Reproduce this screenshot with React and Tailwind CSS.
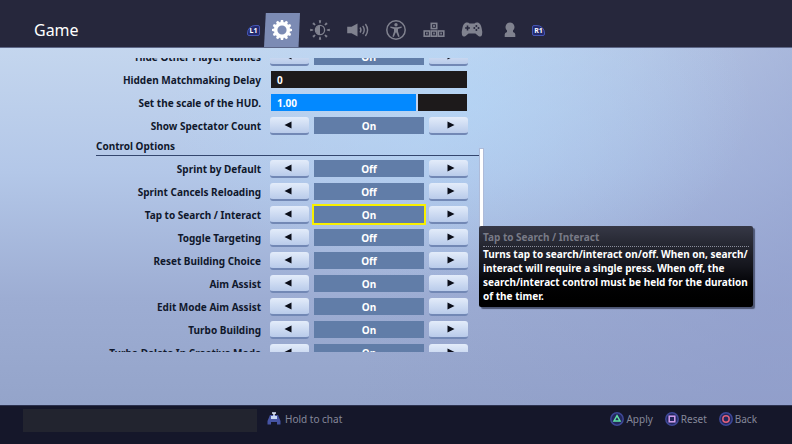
import { useState } from 'react';

const tabs = [
  { id: 'game', label: 'Game', Icon: GearIcon },
  { id: 'video', label: 'Brightness', Icon: SunIcon },
  { id: 'audio', label: 'Audio', Icon: SpeakerIcon },
  { id: 'accessibility', label: 'Accessibility', Icon: PersonIcon },
  { id: 'input', label: 'Input', Icon: KeysIcon },
  { id: 'controller', label: 'Controller', Icon: GamepadIcon },
  { id: 'account', label: 'Account', Icon: PawnIcon },
];

const controlOptions = [
  { name: 'Sprint by Default', value: false },
  { name: 'Sprint Cancels Reloading', value: false },
  { name: 'Tap to Search / Interact', value: true },
  { name: 'Toggle Targeting', value: false },
  { name: 'Reset Building Choice', value: false },
  { name: 'Aim Assist', value: true },
  { name: 'Edit Mode Aim Assist', value: true },
  { name: 'Turbo Building', value: true },
  { name: 'Turbo Delete In Creative Mode', value: true },
];

function GearIcon() {
  const teeth = [0, 30, 60, 90, 120, 150, 180, 210, 240, 270, 300, 330];
  return (
    <svg viewBox="0 0 24 24" className="size-6" fill="currentColor">
      {teeth.map((a) => (
        <path key={a} d="M10.3 5 L10.9 2 H13.1 L13.7 5 Z" transform={`rotate(${a} 12 12)`} />
      ))}
      <circle cx="12" cy="12" r="6.3" fill="none" stroke="currentColor" strokeWidth="3.4" />
    </svg>
  );
}

function SunIcon() {
  const rays = [0, 45, 90, 135, 180, 225, 270, 315];
  return (
    <svg viewBox="0 0 24 24" className="size-6" fill="currentColor">
      {rays.map((a) => (
        <path key={a} d="M10.8 2.2 H13.2 L12.6 5.2 H11.4 Z" transform={`rotate(${a} 12 12)`} />
      ))}
      <circle cx="12" cy="12" r="4.6" fill="none" stroke="currentColor" strokeWidth="1.3" />
      <path d="M12 7.5 a4.5 4.5 0 0 0 0 9 Z" />
    </svg>
  );
}

function SpeakerIcon() {
  return (
    <svg viewBox="0 0 24 24" className="size-6" fill="none" stroke="currentColor" strokeWidth="1.4">
      <path d="M1.2 8.8 H5.5 L11.5 5.5 V18.5 L5.5 15.2 H1.2 Z" fill="currentColor" stroke="none" />
      <path d="M14 9.5 Q16 12 14 14.5" />
      <path d="M16.7 7.8 Q19.8 12 16.7 16.2" />
      <path d="M19.4 6 Q23.8 12 19.4 18" />
    </svg>
  );
}

function PersonIcon() {
  return (
    <svg viewBox="0 0 24 24" className="size-6" fill="currentColor">
      <circle cx="12" cy="12" r="9.2" fill="none" stroke="currentColor" strokeWidth="1.5" />
      <circle cx="12" cy="6.8" r="1.7" />
      <path d="M6.3 8.4 L10.6 9.2 H13.4 L17.7 8.4 V9.8 L14 11 V13.6 L15.6 18.6 L14.2 19 L12.3 14.6 H11.7 L9.8 19 L8.4 18.6 L10 13.6 V11 L6.3 9.8 Z" />
    </svg>
  );
}

function KeysIcon() {
  return (
    <svg viewBox="0 0 24 24" className="size-6" fill="none" stroke="currentColor" strokeWidth="1.6">
      <rect x="9.3" y="5.4" width="5.4" height="5.2" />
      <rect x="2.2" y="13" width="5.4" height="5.2" />
      <rect x="9.3" y="13" width="5.4" height="5.2" />
      <rect x="16.4" y="13" width="5.4" height="5.2" />
      <path d="M12 7 V9 M4.9 14.6 V16.6 M12 14.6 V16.6 M19.1 14.6 V16.6" />
    </svg>
  );
}

function GamepadIcon() {
  return (
    <svg viewBox="0 0 24 24" className="size-6">
      <path
        d="M6 4.6 Q8.5 4 9.5 5.6 H14.5 Q15.5 4 18 4.6 Q20.6 5.4 21.6 10 Q22.8 14.5 22 17 Q20.8 19.6 18.4 18 L15.4 15.6 H8.6 L5.6 18 Q3.2 19.6 2 17 Q1.2 14.5 2.4 10 Q3.4 5.4 6 4.6 Z"
        fill="currentColor"
      />
      <path d="M7.5 7.6 V12.4 M5.1 10 H9.9" stroke="#26273c" strokeWidth="1.6" />
      <g fill="#26273c">
        <circle cx="16.4" cy="7.9" r="1" />
        <circle cx="16.4" cy="12.1" r="1" />
        <circle cx="14.3" cy="10" r="1" />
        <circle cx="18.5" cy="10" r="1" />
      </g>
    </svg>
  );
}

function PawnIcon() {
  return (
    <svg viewBox="0 0 24 24" className="size-6" fill="currentColor">
      <path d="M12 4.5 A4.7 4.7 0 0 1 15 12.6 L15 14 Q17.3 14.6 17.3 16.5 V19 H6.7 V16.5 Q6.7 14.6 9 14 L9 12.6 A4.7 4.7 0 0 1 12 4.5 Z" />
    </svg>
  );
}

function Bumper({ children, side }) {
  return (
    <button
      aria-label={side === 'left' ? 'Previous tab' : 'Next tab'}
      className={`flex h-[11px] w-[13px] items-center justify-center border border-[#4656b4] bg-[#232a6e] text-[7px] leading-none font-bold text-white ${
        side === 'left' ? 'rounded-xs rounded-tl-lg' : 'ml-[3px] rounded-xs rounded-tr-lg'
      }`}
    >
      {children}
    </button>
  );
}

function ArrowButton({ direction, label, onClick }) {
  return (
    <button
      aria-label={label}
      onClick={onClick}
      className={`flex h-[18px] w-[39px] items-center justify-center rounded-[3px] border-b-2 border-[#7288b5] bg-linear-to-b from-[#e3ecfa] to-[#b9cbea] ${
        direction === 'left' ? 'pr-1' : 'pl-1'
      }`}
    >
      <svg viewBox="0 0 8 8" className="size-2" fill="#0a0d18">
        <path d={direction === 'left' ? 'M7.5 0.5 V7.5 L0.5 4 Z' : 'M0.5 0.5 V7.5 L7.5 4 Z'} />
      </svg>
    </button>
  );
}

function Row({ label, htmlFor, children }) {
  const Label = htmlFor ? 'label' : 'span';
  return (
    <div className="flex h-[23px] items-center gap-[9px]">
      <Label htmlFor={htmlFor} className="w-[165px] text-right whitespace-nowrap">
        {label}
      </Label>
      <div className="w-[198px]">{children}</div>
    </div>
  );
}

function ToggleRow({ name, initial, focused }) {
  const [on, setOn] = useState(initial);
  const toggle = () => setOn(!on);

  return (
    <Row label={name}>
      <div role="group" aria-label={name} className="flex items-center gap-[5px]">
        <ArrowButton direction="left" label={`Previous ${name}`} onClick={toggle} />
        <output
          className={`flex h-[17px] flex-1 items-center justify-center bg-[#617da8] text-white ${
            focused ? 'outline-2 outline-[#f8f000]' : ''
          }`}
        >
          {on ? 'On' : 'Off'}
        </output>
        <ArrowButton direction="right" label={`Next ${name}`} onClick={toggle} />
      </div>
    </Row>
  );
}

function SliderRow({ id, name, initial, max, digits }) {
  const [value, setValue] = useState(initial);

  return (
    <Row label={name} htmlFor={id}>
      <div className="relative mx-px flex h-[17px] items-center bg-[#1d1a1b]">
        <div
          className={`h-full bg-[#0389ff] ${value > 0 ? 'border-r-2 border-[#c3d3ee]' : ''}`}
          style={{ width: `${(value / max) * 100}%` }}
        />
        <span className="absolute left-1.5 text-white">{value.toFixed(digits)}</span>
        <input
          id={id}
          type="range"
          min="0"
          max={max}
          step="any"
          value={value}
          onChange={(e) => setValue(Number(e.target.value))}
          className="absolute inset-0 w-full opacity-0"
        />
      </div>
    </Row>
  );
}

function FooterButton({ label, children }) {
  return (
    <button className="flex items-center gap-0.5">
      <svg viewBox="0 0 14 14" className="size-3.5" fill="none" strokeWidth="1.5">
        <circle cx="7" cy="7" r="6.2" fill="#22265c" stroke="#3d4796" />
        {children}
      </svg>
      {label}
    </button>
  );
}

export default function App() {
  const [activeTab, setActiveTab] = useState('game');

  return (
    <div className="flex h-screen flex-col bg-[#15172a] font-['Noto_Sans',sans-serif]">
      <header className="flex h-12 shrink-0 items-end border-b border-[#5d6788] bg-[#26273c]">
        <h1 className="w-[247px] self-center pt-3 pl-[34px] text-base leading-6 text-white">Game</h1>
        <nav className="flex items-center">
          <Bumper side="left">L1</Bumper>
          {tabs.map(({ id, label, Icon }) => (
            <button
              key={id}
              aria-label={label}
              onClick={() => setActiveTab(id)}
              className={`flex h-[34px] items-center justify-center ${
                activeTab === id
                  ? 'mr-px ml-1 w-9 bg-[#7c8bb4] text-white [clip-path:polygon(5%_0,100%_0,96%_100%,0_100%)]'
                  : 'w-[38px] text-[#80828f]'
              }`}
            >
              <Icon />
            </button>
          ))}
          <Bumper side="right">R1</Bumper>
        </nav>
      </header>

      <main className="relative flex min-h-0 flex-1 bg-[radial-gradient(ellipse_at_58%_15%,#b2d6f8aa_0%,transparent_45%),linear-gradient(105deg,transparent_50%,#8f9bcb99_95%),linear-gradient(to_bottom,#c4d6ee_0%,#b3c7e8_35%,#9dadd3_70%,#94a4ca_100%)] px-24 pt-2.5 pb-[53px] text-[10px] leading-[14px] font-bold text-[#10182c]">
        <div className="w-[383px] overflow-hidden">
          <div className="-mt-[13px]">
            <ToggleRow name="Hide Other Player Names" initial={false} />
            <SliderRow id="delay" name="Hidden Matchmaking Delay" initial={0} max={10} digits={0} />
            <SliderRow id="hud-scale" name="Set the scale of the HUD." initial={1} max={1.33} digits={2} />
            <ToggleRow name="Show Spectator Count" initial />
            <h2 className="mb-px h-[19px] border-b border-[#34466e] pt-0.5">Control Options</h2>
            {controlOptions.map((option) => (
              <ToggleRow
                key={option.name}
                name={option.name}
                initial={option.value}
                focused={option.name === 'Tap to Search / Interact'}
              />
            ))}
          </div>
        </div>
        <div className="mt-[90px] h-[120px] w-[5px] border border-[#aebbd8] bg-white" />

        <div
          role="tooltip"
          className="absolute top-[178px] left-[479px] w-[274px] rounded-xs bg-linear-to-b from-[#363846] via-[#14151c] to-black px-1 pt-1 pb-1 text-white shadow-[2px_2px_1px_#4d5673]"
        >
          <h3 className="border-b border-dotted border-[#8a8d9c] pb-0.5 text-[#787a86]">Tap to Search / Interact</h3>
          <p>
            Turns tap to search/interact on/off. When on, search/
            <wbr />
            interact will require a single press. When off, the search/interact control must be held for the duration of the
            timer.
          </p>
        </div>
      </main>

      <footer className="flex h-[39px] shrink-0 items-start border-t border-[#2c3250] px-[23px] pt-[3px] text-[10px] leading-[14px] text-[#85889a]">
        <div className="h-[23px] w-[234px] bg-[#22242f]" />
        <div className="ml-2.5 flex h-5 items-center gap-1">
          <svg viewBox="0 0 14 14" className="size-3.5">
            <path d="M3 3 H11 L13.5 9 V12.5 H10 V10 H4 V12.5 H0.5 V9 Z" fill="#4654a4" />
            <path d="M4 4 H10 V7 H4 Z" fill="#c8d8f5" />
            <path d="M5 1 H9 M7 1 V4" stroke="#dfe8fa" strokeWidth="1.5" />
          </svg>
          Hold to chat
        </div>
        <div className="ml-auto flex h-5 items-center gap-3 pr-3">
          <FooterButton label="Apply">
            <path d="M7 3.7 L10 9 H4 Z" stroke="#62e3a6" />
          </FooterButton>
          <FooterButton label="Reset">
            <rect x="4.2" y="4.2" width="5.6" height="5.6" stroke="#d3a0f0" />
          </FooterButton>
          <FooterButton label="Back">
            <circle cx="7" cy="7" r="3.2" stroke="#e0607a" />
          </FooterButton>
        </div>
      </footer>
    </div>
  );
}
